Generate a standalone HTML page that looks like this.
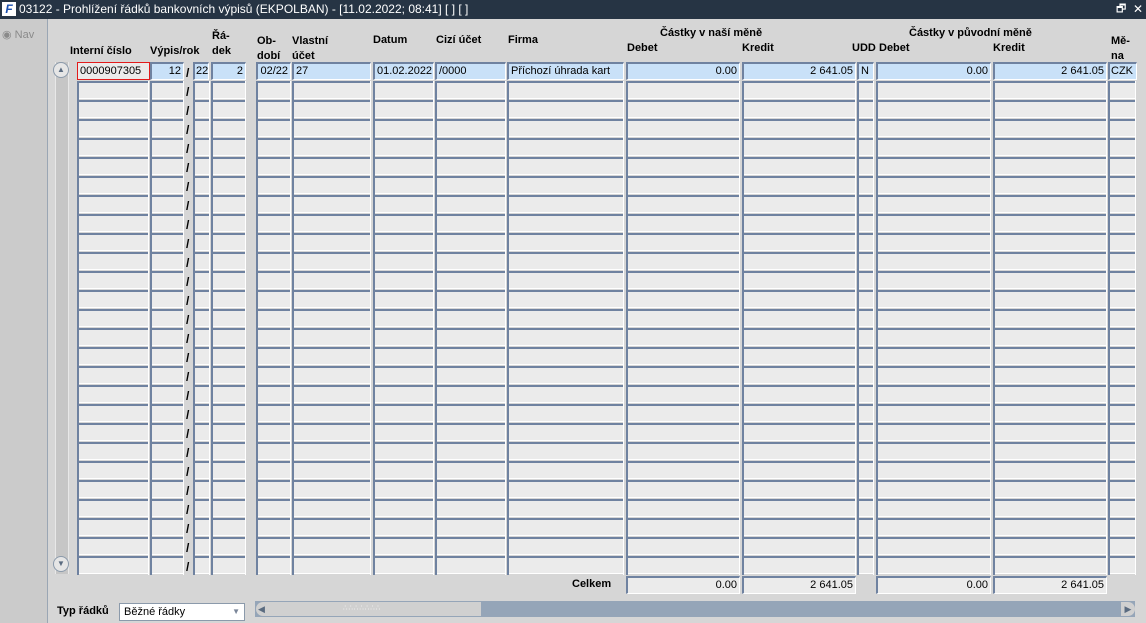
<!DOCTYPE html>
<html><head><meta charset="utf-8"><style>
body{margin:0;width:1146px;height:623px;background:#d6d6d6;font-family:"Liberation Sans",Arial,sans-serif;font-size:11px;position:relative;overflow:hidden;color:#000}
.a{position:absolute}
.title{left:0;top:0;width:1146px;height:19px;background:#263444;color:#fff;font-size:12px;line-height:19px}
.b{font-weight:bold;font-size:11px}
.col{position:absolute;top:81px;height:494px;background:linear-gradient(to right,#6f82a0 2px,transparent 2px,transparent calc(100% - 1px),#fff calc(100% - 1px)),repeating-linear-gradient(to bottom,#6f82a0 0,#6f82a0 2px,#ebebeb 2px,#ebebeb 17px,#fff 17px,#fff 18px,#d6d6d6 18px,#d6d6d6 19px)}
.f{position:absolute;height:15px;background:#c9e1f8;border-top:2px solid #6f82a0;border-left:2px solid #6f82a0;border-bottom:1px solid #fff;border-right:1px solid #fff;line-height:15px;padding:0 2px;box-sizing:content-box;white-space:nowrap;overflow:hidden}
.g{background:#ebebeb}
.r{text-align:right}
</style></head><body>
<div class="a title"><span style="position:absolute;left:2px;top:2px;width:14px;height:14px;background:#fff;color:#1a4fb0;font-weight:bold;font-style:italic;font-size:12px;line-height:14px;text-align:center">F</span><span style="position:absolute;left:19px">03122 - Prohlížení řádků bankovních výpisů (EKPOLBAN) - [11.02.2022; 08:41] [ ] [ ]</span><span style="position:absolute;left:1116px;font-size:11px">🗗</span><span style="position:absolute;left:1133px">✕</span></div>
<div class="a" style="left:0;top:19px;width:47px;height:604px;background:#cbcbcb;border-right:1px solid #9aa6b4"></div>
<div class="a" style="left:2px;top:28px;color:#8a8a8a">◉ Nav</div>

<div class="a b" style="left:70px;top:45px">Interní číslo</div>
<div class="a b" style="left:150px;top:45px">Výpis/rok</div>
<div class="a b" style="left:212px;top:29px;line-height:15px">Řá-<br>dek</div>
<div class="a b" style="left:257px;top:34px;line-height:15px">Ob-<br>dobí</div>
<div class="a b" style="left:292px;top:34px;line-height:15px">Vlastní<br>účet</div>
<div class="a b" style="left:373px;top:34px">Datum</div>
<div class="a b" style="left:436px;top:34px">Cizí účet</div>
<div class="a b" style="left:508px;top:34px">Firma</div>
<div class="a b" style="left:660px;top:27px">Částky v naší měně</div>
<div class="a b" style="left:627px;top:42px">Debet</div>
<div class="a b" style="left:742px;top:42px">Kredit</div>
<div class="a b" style="left:852px;top:42px">UDD</div>
<div class="a b" style="left:879px;top:42px">Debet</div>
<div class="a b" style="left:909px;top:27px">Částky v původní měně</div>
<div class="a b" style="left:993px;top:42px">Kredit</div>
<div class="a b" style="left:1111px;top:34px;line-height:15px">Mě-<br>na</div>

<!-- vertical scrollbar -->
<div class="a" style="left:55px;top:62px;width:12px;height:512px;background:#c6c6c6;border-left:1px solid #e8e8e8;border-right:1px solid #e8e8e8"></div>
<div class="a" style="left:53px;top:62px;width:14px;height:14px;border:1px solid #8b9aab;border-radius:8px;background:#e6e6e6;font-size:8px;line-height:14px;text-align:center;color:#5a6b80">▲</div>
<div class="a" style="left:53px;top:556px;width:14px;height:14px;border:1px solid #8b9aab;border-radius:8px;background:#e6e6e6;font-size:8px;line-height:14px;text-align:center;color:#5a6b80">▼</div>

<!-- empty columns -->
<div class="col" style="left:77px;width:72px"></div>
<div class="col" style="left:150px;width:34px"></div>
<div class="col" style="left:193px;width:17px"></div>
<div class="col" style="left:211px;width:35px"></div>
<div class="col" style="left:256px;width:35px"></div>
<div class="col" style="left:292px;width:79px"></div>
<div class="col" style="left:373px;width:61px"></div>
<div class="col" style="left:435px;width:71px"></div>
<div class="col" style="left:507px;width:117px"></div>
<div class="col" style="left:626px;width:114px"></div>
<div class="col" style="left:742px;width:114px"></div>
<div class="col" style="left:857px;width:17px"></div>
<div class="col" style="left:876px;width:115px"></div>
<div class="col" style="left:993px;width:114px"></div>
<div class="col" style="left:1108px;width:28px"></div>
<div class="a b" style="left:186px;top:64px;line-height:19px;font-size:12px">/<br>/<br>/<br>/<br>/<br>/<br>/<br>/<br>/<br>/<br>/<br>/<br>/<br>/<br>/<br>/<br>/<br>/<br>/<br>/<br>/<br>/<br>/<br>/<br>/<br>/<br>/</div>

<!-- row 1 -->
<div class="f" style="left:77px;top:62px;width:67px;background:#ebebeb;border:1px solid #e21b1b;height:16px;line-height:16px">0000907305</div>
<div class="f r" style="left:150px;top:62px;width:27px">12</div>
<div class="f" style="left:193px;top:62px;width:11px;padding:0 1px">22</div>
<div class="f r" style="left:211px;top:62px;width:28px">2</div>
<div class="f r" style="left:256px;top:62px;width:28px">02/22</div>
<div class="f" style="left:292px;top:62px;width:72px">27</div>
<div class="f" style="left:373px;top:62px;width:54px">01.02.2022</div>
<div class="f" style="left:435px;top:62px;width:64px">/0000</div>
<div class="f" style="left:507px;top:62px;width:110px">Příchozí úhrada kart</div>
<div class="f r" style="left:626px;top:62px;width:107px">0.00</div>
<div class="f r" style="left:742px;top:62px;width:107px">2 641.05</div>
<div class="f" style="left:857px;top:62px;width:10px">N</div>
<div class="f r" style="left:876px;top:62px;width:108px">0.00</div>
<div class="f r" style="left:993px;top:62px;width:107px">2 641.05</div>
<div class="f" style="left:1108px;top:62px;width:24px;padding:0 1px">CZK</div>

<!-- totals -->
<div class="a b" style="left:572px;top:578px">Celkem</div>
<div class="f g r" style="left:626px;top:576px;width:107px">0.00</div>
<div class="f g r" style="left:742px;top:576px;width:107px">2 641.05</div>
<div class="f g r" style="left:876px;top:576px;width:108px">0.00</div>
<div class="f g r" style="left:993px;top:576px;width:107px">2 641.05</div>

<!-- bottom -->
<div class="a b" style="left:57px;top:605px">Typ řádků</div>
<div class="a" style="left:119px;top:603px;width:124px;height:16px;background:#fff;border:1px solid #8b9aab;line-height:16px"><span style="padding-left:4px">Běžné řádky</span><span style="position:absolute;right:4px;top:0;color:#7a8699;font-size:8px">▼</span></div>
<div class="a" style="left:255px;top:601px;width:880px;height:16px;background:#95a5b8"></div>
<div class="a" style="left:256px;top:602px;width:225px;height:14px;background:#d0d0d0;border-radius:7px 0 0 7px"></div>
<div class="a" style="left:258px;top:602px;font-size:9px;color:#5a6b80;line-height:14px">◀</div>
<div class="a" style="left:343px;top:604px;font-size:7px;color:#f4f4f4;letter-spacing:1px">∴∴∴∴∴∴∴</div>
<div class="a" style="left:1121px;top:602px;width:14px;height:14px;background:#d0d0d0;border-radius:0 7px 7px 0;font-size:9px;color:#5a6b80;line-height:14px;text-align:center">▶</div>
</body></html>
